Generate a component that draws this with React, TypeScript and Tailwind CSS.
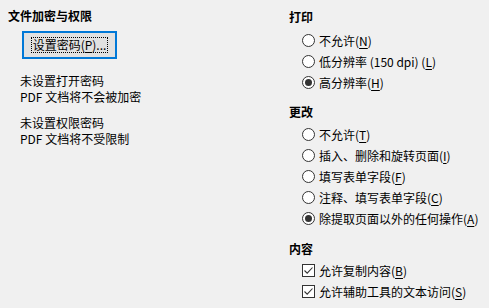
import React from "react";

const font = { fontFamily: '"Noto Sans CJK SC", "Noto Sans", sans-serif' };

function Label({ text, mnemonic }: { text: string; mnemonic: string }) {
  return (
    <span>
      {text}(<span className="underline underline-offset-2">{mnemonic}</span>)
    </span>
  );
}

function Radio({ checked, text, mnemonic }: { checked?: boolean; text: string; mnemonic: string }) {
  return (
    <div className="flex h-[21px] items-center gap-[4px] pl-[13px]">
      <span className="flex h-[13px] w-[13px] items-center justify-center rounded-full border border-[#333333] bg-white">
        {checked && <span className="h-[7px] w-[7px] rounded-full bg-[#333333]" />}
      </span>
      <Label text={text} mnemonic={mnemonic} />
    </div>
  );
}

function Check({ text, mnemonic }: { text: string; mnemonic: string }) {
  return (
    <div className="flex h-[21px] items-center gap-[4px] pl-[13px]">
      <span className="flex h-[13px] w-[13px] items-center justify-center border border-[#333333] bg-white">
        <svg width="11" height="11" viewBox="0 0 11 11">
          <path d="M1.5 5.5 L4.2 8.2 L9.5 2.5" fill="none" stroke="#333333" strokeWidth="1.1" />
        </svg>
      </span>
      <Label text={text} mnemonic={mnemonic} />
    </div>
  );
}

export default function App() {
  return (
    <div className="flex h-[308px] w-[489px] bg-[#f0f0f0] text-[12px] leading-[16px] text-black" style={font}>
      <div className="flex w-[289px] shrink-0 flex-col pl-[8px] pt-[8px]">
        <div className="font-bold">文件加密与权限</div>
        <div className="ml-[14px] mt-[7px] flex h-[28px] w-[95px] items-center justify-center border-2 border-[#0078d7] bg-[#e1e1e1]">
          <span className="border border-dotted border-black px-[1px] leading-[14px]">
            设置密码(<span className="underline underline-offset-2">P</span>)...
          </span>
        </div>
        <div className="ml-[12px] mt-[14px]">
          <div>未设置打开密码</div>
          <div>PDF 文档将不会被加密</div>
        </div>
        <div className="ml-[12px] mt-[10px]">
          <div>未设置权限密码</div>
          <div>PDF 文档将不受限制</div>
        </div>
      </div>
      <div className="flex flex-col pt-[9px]">
        <div className="font-bold">打印</div>
        <div className="mt-[5px]">
          <Radio text="不允许" mnemonic="N" />
          <Radio text="低分辨率 (150 dpi) " mnemonic="L" />
          <Radio checked text="高分辨率" mnemonic="H" />
        </div>
        <div className="mt-[11px] font-bold">更改</div>
        <div className="mt-[4px]">
          <Radio text="不允许" mnemonic="T" />
          <Radio text="插入、删除和旋转页面" mnemonic="I" />
          <Radio text="填写表单字段" mnemonic="F" />
          <Radio text="注释、填写表单字段" mnemonic="C" />
          <Radio checked text="除提取页面以外的任何操作" mnemonic="A" />
        </div>
        <div className="mt-[12px] font-bold">内容</div>
        <div className="mt-[3px]">
          <Check text="允许复制内容" mnemonic="B" />
          <Check text="允许辅助工具的文本访问" mnemonic="S" />
        </div>
      </div>
    </div>
  );
}
